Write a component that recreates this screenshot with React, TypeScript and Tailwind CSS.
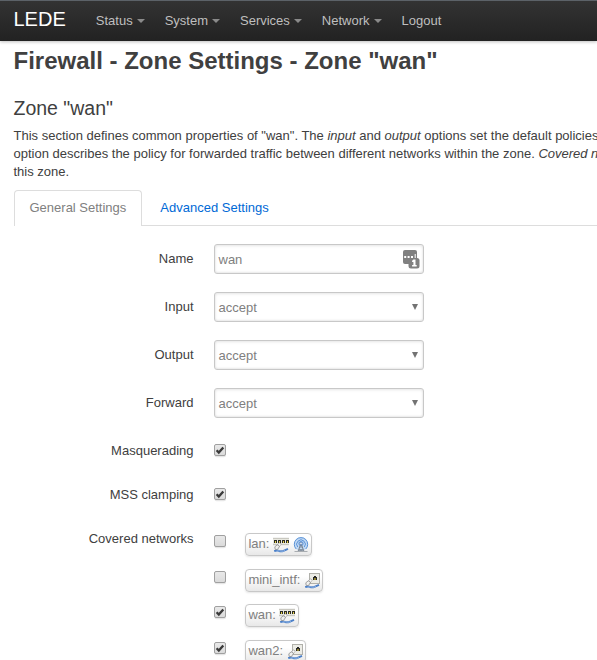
import React from "react";

function Caret() {
  return <span className="ml-[4px] mr-[1px] mt-[1px] h-0 w-0 border-x-4 border-t-4 border-x-transparent border-t-[#8a8a8a]" />;
}

function NavItem({ label, menu = true }: { label: string; menu?: boolean }) {
  return (
    <a className="flex items-center px-[9.5px] text-[13px] leading-[18px] text-[#bfbfbf]">
      {label}
      {menu && <Caret />}
    </a>
  );
}

function Row({ label, className, children }: { label: string; className: string; children: React.ReactNode }) {
  return (
    <div className={"flex items-start " + className}>
      <label className="w-[193.5px] shrink-0 pt-[6px] text-right leading-[18px]">{label}</label>
      <div className="ml-[20.5px]">{children}</div>
    </div>
  );
}

function Field({ value, children }: { value: string; children: React.ReactNode }) {
  return (
    <div className="flex h-[30px] w-[210px] items-center justify-between rounded-[3px] border border-[#c8c8c8] pl-[3.5px] pr-1 text-[#808080] shadow-[inset_0_1px_3px_rgba(0,0,0,0.1),inset_0_-1px_2px_rgba(0,0,0,0.08)]">
      <span className="pt-[2px]">{value}</span>
      {children}
    </div>
  );
}

function Select({ value }: { value: string }) {
  return (
    <Field value={value}>
      <svg width="8" height="8" viewBox="0 0 8 8" className="mb-[1px]">
        <path d="M1 1h6L4 7z" fill="#737373" />
      </svg>
    </Field>
  );
}

function PasswordIcon() {
  return (
    <svg width="17" height="19" viewBox="0 0 17 19" className="-mr-px">
      <rect x="0" y="0" width="14" height="14" rx="2" fill="#808080" />
      <path d="M1.2 6h2v2h-2zM4.6 6h2v2h-2zM8 6h2v2H8zM11.7 4h1v4h-1z" fill="#fff" />
      <rect x="5.5" y="8" width="11" height="10.5" rx="2.5" fill="#808080" />
      <path d="M10.3 9.6h2.2v5.4h1.2v1.6H9.1V15h1.3v-3H9.1v-1.4q1-.1 1.2-1z" fill="#fff" />
    </svg>
  );
}

function Check({ on }: { on: boolean }) {
  return (
    <svg width="13" height="14" viewBox="0 0 13 14" className="block">
      <defs>
        <linearGradient id="box" x1="0" y1="0" x2="0" y2="1">
          <stop offset="0" stopColor="#e9e9e9" />
          <stop offset="1" stopColor="#dadada" />
        </linearGradient>
      </defs>
      <rect x="0.5" y="1" width="11.5" height="12.2" rx="2" fill="#e6e6e6" />
      <rect x="0.5" y="0.5" width="11" height="11" rx="1.5" fill="url(#box)" stroke="#a0a0a0" />
      {on && <path d="M2.6 6.3L4.8 8.6L9.3 3.4" fill="none" stroke="#3a3a3a" strokeWidth="2.3" />}
    </svg>
  );
}

function Cable() {
  return (
    <>
      <path d="M1.2 14.2Q4 13 6 13.9T10.5 13.8L15 11.8" fill="none" stroke="#4a7fc8" strokeWidth="1.9" />
      <path d="M3.5 14Q6 13.2 8 14.2T12 13.2" fill="none" stroke="#a8c6ed" strokeWidth=".6" />
      <path d="M1.8 9.8L4.3 7.8L6.6 9.4L4.4 12.6L2.2 12.4z" fill="#f0f0ee" stroke="#8a8a8a" strokeWidth=".8" />
      <path d="M4.6 7.6L6.8 5.8L8.3 7.3L6.4 9.2z" fill="#fafafa" stroke="#888" strokeWidth=".6" />
    </>
  );
}

function SwitchIcon() {
  return (
    <svg width="16" height="16" viewBox="0 0 16 16">
      <path d="M0 1h16v7H0z" fill="#e8e8e0" />
      <path d="M0 1.3h16M0 7.7h16" stroke="#b0afa7" strokeWidth=".7" />
      <path d="M1 3h3v3H1zM5 3h3v3H5zM9 3h3v3H9zM13 3h3v3h-3z" fill="#2b2b26" />
      <path d="M2 4h1v2H2zM6 4h1v2H6zM10 4h1v2h-1zM14 4h1v2h-1z" fill="#e2cc48" />
      <Cable />
    </svg>
  );
}

function EthernetIcon() {
  return (
    <svg width="16" height="16" viewBox="0 0 16 16">
      <rect x="5.5" y=".5" width="10" height="10" fill="#ecece6" stroke="#b0b0aa" />
      <path d="M9 4h1V3h2v1h1v3H9z" fill="#292926" />
      <path d="M10 5h2v2h-2z" fill="#8f8231" />
      <Cable />
    </svg>
  );
}

function WifiIcon() {
  return (
    <svg width="16" height="16" viewBox="0 0 16 16">
      <circle cx="8" cy="7" r="6.9" fill="#c3daf4" />
      <g fill="none" stroke="#5b93d8">
        <path d="M3.2 12A6.7 6.7 0 1 1 12.8 12" />
        <path d="M4.8 10.1A4.3 4.3 0 1 1 11.2 10.1" />
        <circle cx="8" cy="6.6" r="2.1" />
      </g>
      <path d="M8 6.5L4.8 15M8 6.5L11.2 15M6.7 10H9.3M6 12L10.5 14.3M10 12L5.5 14.3" stroke="#7b8591" />
      <circle cx="8" cy="6.5" r="1.2" fill="#e9f3ff" stroke="#5271a4" strokeWidth=".6" />
      <path d="M1.5 14.5h13" stroke="#a9adb1" />
    </svg>
  );
}

function Network({ name, on, className, children }: { name: string; on: boolean; className: string; children: React.ReactNode }) {
  return (
    <div className={"flex items-start " + className}>
      <div className="w-[31px] pt-[2px]">
        <Check on={on} />
      </div>
      <span className="flex h-[23px] items-center gap-1 rounded-[4px] border border-[#c8c8c8] bg-linear-to-b from-white from-30% to-[#e8e8e8] pl-[2.4px] pr-[2.3px] leading-[18px] text-[#808080] shadow-[0_1px_2px_rgba(0,0,0,0.1)]">
        <span className="-mt-px -mr-[0.6px]">{name}:</span>
        {children}
      </span>
    </div>
  );
}

export default function App() {
  return (
    <div className="h-[660px] w-[597px] overflow-hidden bg-white font-['Liberation_Sans',Arial,sans-serif] text-[13px] leading-[18px] text-[#404040]">
      <header className="flex h-[41px] border-t border-[#5c6268] bg-linear-to-b from-[#333] to-[#222] pl-[13.5px] shadow-[0_1px_3px_rgba(0,0,0,0.25)]">
        <span className="w-[72.8px] pt-2 text-[20px] leading-5 text-white">LEDE</span>
        <nav className="flex pb-px">
          <NavItem label="Status" />
          <NavItem label="System" />
          <NavItem label="Services" />
          <NavItem label="Network" />
          <NavItem label="Logout" menu={false} />
        </nav>
      </header>
      <main>
        <h2 className="pl-[13.5px] pt-[2px] text-[24px] leading-9 font-bold">Firewall - Zone Settings - Zone "wan"</h2>
        <h3 className="mt-[11px] pl-[13.5px] text-[19.5px] leading-9">Zone "wan"</h3>
        <p className="pl-[13.5px] pt-px whitespace-nowrap">
          This section defines common properties of "wan". The <em>input</em> and <em>output</em> options set the default policies
          <br />
          option describes the policy for forwarded traffic between different networks within the zone. <em>Covered networks</em>
          <br />
          this zone.
        </p>
        <div className="mt-[9px] ml-[13.5px] flex h-9 border-b border-[#ddd]">
          <a className="h-9 rounded-t-[4px] border border-b-0 border-[#ddd] bg-white px-[15px] pt-2 text-[#808080]">General Settings</a>
          <a className="pl-[18px] pt-[9px] text-[#0069d6]">Advanced Settings</a>
        </div>
        <form className="pt-[18px]">
          <Row label="Name" className="h-12">
            <Field value="wan">
              <PasswordIcon />
            </Field>
          </Row>
          <Row label="Input" className="h-12">
            <Select value="accept" />
          </Row>
          <Row label="Output" className="h-12">
            <Select value="accept" />
          </Row>
          <Row label="Forward" className="h-12">
            <Select value="accept" />
          </Row>
          <Row label="Masquerading" className="h-11">
            <div className="pt-2">
              <Check on />
            </div>
          </Row>
          <Row label="MSS clamping" className="h-11">
            <div className="pt-2">
              <Check on />
            </div>
          </Row>
          <Row label="Covered networks" className="">
            <div className="pt-[9px]">
              <Network name="lan" on={false} className="h-9">
                <SwitchIcon />
                <WifiIcon />
              </Network>
              <Network name="mini_intf" on={false} className="h-[35px]">
                <EthernetIcon />
              </Network>
              <Network name="wan" on className="h-9">
                <SwitchIcon />
              </Network>
              <Network name="wan2" on className="h-9">
                <EthernetIcon />
              </Network>
            </div>
          </Row>
        </form>
      </main>
    </div>
  );
}
